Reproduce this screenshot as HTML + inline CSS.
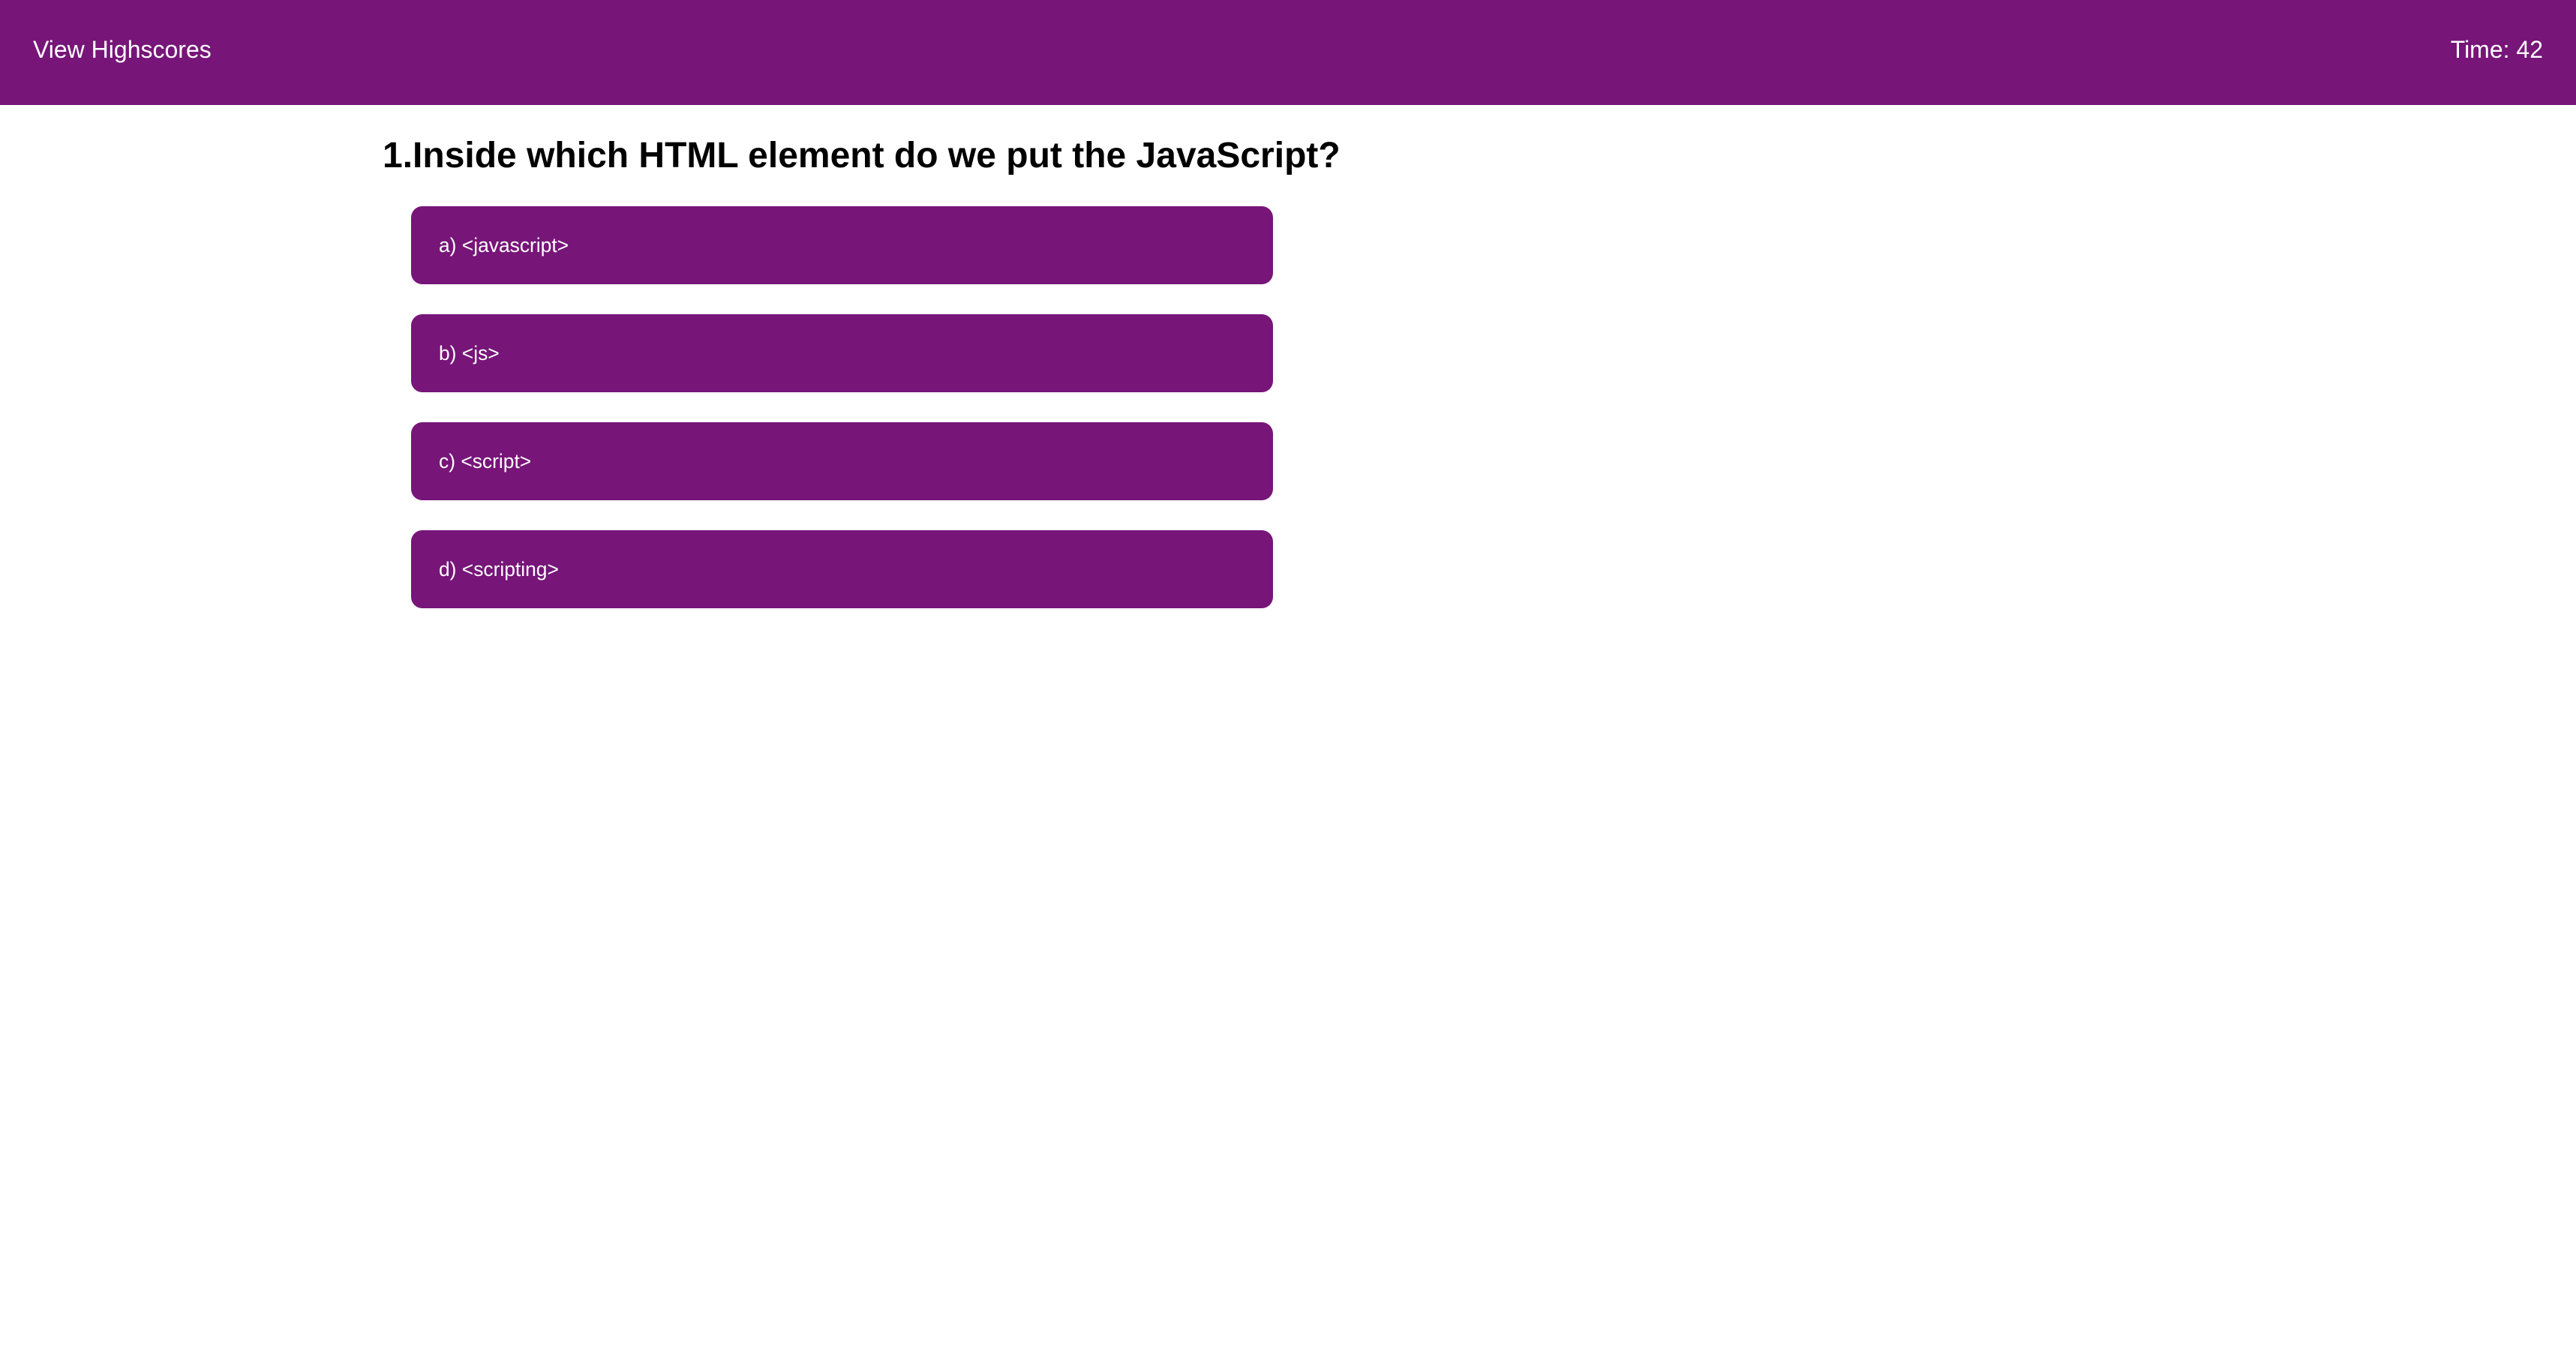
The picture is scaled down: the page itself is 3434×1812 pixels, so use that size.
<!DOCTYPE html>
<html><head><meta charset="utf-8"><style>
*{margin:0;padding:0;box-sizing:border-box}
html,body{width:3434px;height:1812px;background:#fff;font-family:"Liberation Sans",Arial,sans-serif;overflow:hidden;position:relative}
.hdr{position:absolute;left:0;top:0;width:3434px;height:140px;background:#771579;color:#fff;font-size:32px}
.hdr .l{position:absolute;left:44px;top:48px;line-height:36px}
.hdr .r{position:absolute;right:44px;top:48px;line-height:36px}
h1{position:absolute;left:510px;top:178px;font-size:48px;font-weight:bold;line-height:60px;white-space:nowrap;color:#000}
.b{position:absolute;left:548px;width:1149px;height:104px;background:#771579;border-radius:15px;color:#fff;font-size:26.4px;line-height:104px;padding-left:37px}
</style></head><body>
<div class="hdr"><div class="l">View Highscores</div><div class="r">Time: 42</div></div>
<h1>1.Inside which HTML element do we put the JavaScript?</h1>
<div class="b" style="top:275px">a) &lt;javascript&gt;</div>
<div class="b" style="top:419px">b) &lt;js&gt;</div>
<div class="b" style="top:563px">c) &lt;script&gt;</div>
<div class="b" style="top:707px">d) &lt;scripting&gt;</div>
</body></html>
